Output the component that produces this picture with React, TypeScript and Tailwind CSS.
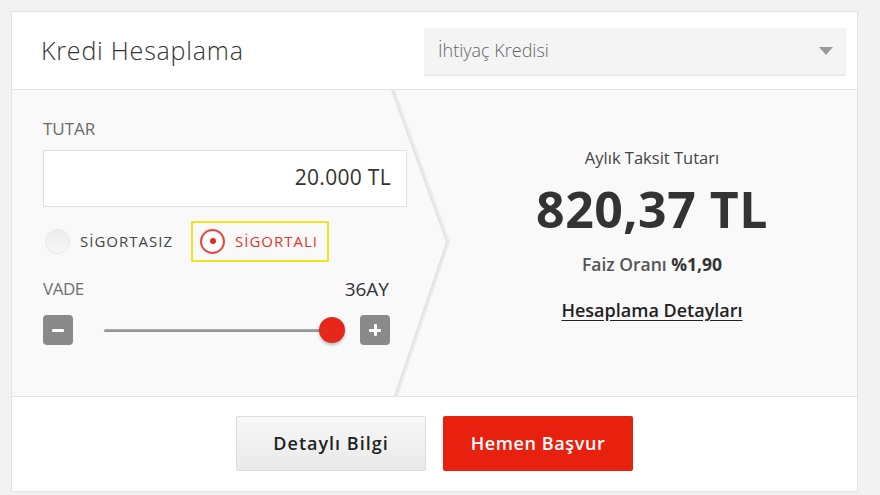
const font = { fontFamily: '"Open Sans", "Noto Sans", sans-serif' };

function Radio({ checked, label }: { checked?: boolean; label: string }) {
  return (
    <div className="flex items-center gap-[10px]">
      {checked ? (
        <span className="flex size-[25px] items-center justify-center rounded-full border-2 border-[#e5483f] bg-white">
          <span className="size-[6px] rounded-full bg-[#e52b1f]" />
        </span>
      ) : (
        <span className="size-[25px] rounded-full border border-[#e6e6e6] bg-gradient-to-b from-[#ececec] to-[#f7f7f7]" />
      )}
      <span
        className={`text-[15px] tracking-[1px] ${checked ? 'text-[#e0352b]' : 'text-[#444]'}`}
      >
        {label}
      </span>
    </div>
  );
}

function StepButton({ sign }: { sign: '-' | '+' }) {
  return (
    <button className="relative flex size-[30px] items-center justify-center rounded-[4px] bg-[#8a8a8a]">
      <span className="h-[3px] w-[12px] rounded-[1px] bg-white" />
      {sign === '+' && <span className="absolute h-[12px] w-[3px] rounded-[1px] bg-white" />}
    </button>
  );
}

export default function App() {
  return (
    <div className="h-[495px] w-[880px] overflow-hidden bg-[#f2f2f2] pl-[11px] pt-[11px]" style={font}>
      <div className="w-[847px] border border-[#e2e2e2] bg-white">
        {/* Header */}
        <header className="flex h-[78px] items-center justify-between border-b border-[#e4e4e4] pl-[29px] pr-[11px]">
          <h1 className="text-[25px] font-light tracking-[0.8px] text-[#333]">Kredi Hesaplama</h1>
          <div className="flex h-[46px] w-[422px] items-center justify-between bg-[#f4f4f4] pl-[14px] pr-[12px] shadow-[0_2px_1px_rgba(0,0,0,0.08)]">
            <span className="text-[18px] font-light text-[#666]">İhtiyaç Kredisi</span>
            <svg width="16" height="10" viewBox="0 0 16 10">
              <path d="M1 1h14L8 9z" fill="#999" />
            </svg>
          </div>
        </header>

        {/* Body */}
        <div className="relative flex h-[306px] bg-[#f9f9f9]">
          <svg className="absolute left-[376px] top-0" width="64" height="306" viewBox="0 0 64 306">
            <polyline points="5,0 60,152 8,306" fill="none" stroke="#ececec" strokeWidth="4" />
            <polyline points="4,0 59,152 7,306" fill="none" stroke="#e2e2e2" strokeWidth="1.5" />
          </svg>

          <div className="flex w-[435px] flex-col pl-[31px] pr-[40px] pt-[26px]">
            <div className="text-[17px] font-medium text-[#6a6a6a]">TUTAR</div>
            <div className="mt-[8px] flex h-[57px] w-[364px] items-center justify-end border border-[#e0e0e0] bg-white pr-[15px] text-[21px] font-medium tracking-[0.3px] text-[#333]">
              20.000 TL
            </div>
            <div className="mt-[14px] flex items-center gap-[18px] pl-[2px]">
              <Radio label="SİGORTASIZ" />
              <div className="flex h-[41px] items-center border-2 border-[#f3e21c] pl-[7px] pr-[9px]">
                <Radio checked label="SİGORTALI" />
              </div>
            </div>
            <div className="mt-[13px] flex w-[346px] items-center justify-between">
              <span className="text-[17px] tracking-[-0.5px] text-[#707070]">VADE</span>
              <span className="text-[19px] font-medium text-[#333]">36AY</span>
            </div>
            <div className="mt-[12px] flex w-[347px] items-center justify-between">
              <StepButton sign="-" />
              <div className="relative ml-[31px] mr-[28px] flex flex-1 items-center">
                <div className="h-[3px] w-full rounded-full bg-gradient-to-b from-[#b0b0b0] to-[#8c8c8c]" />
                <span className="absolute right-[-13px] size-[26px] rounded-full bg-[#e5281b] shadow-[0_2px_3px_rgba(0,0,0,0.25)]" />
              </div>
              <StepButton sign="+" />
            </div>
          </div>

          <div className="flex flex-1 flex-col items-center pt-[56px] text-center">
            <div className="text-[16.5px] font-medium text-[#444]">Aylık Taksit Tutarı</div>
            <div className="mt-[8px] text-[50px] font-bold leading-[60px] tracking-[0.5px] text-[#333]">
              820,37 TL
            </div>
            <div className="mt-[12px] text-[17.5px] font-semibold text-[#555]">
              Faiz Oranı <span className="font-bold text-[#333]">%1,90</span>
            </div>
            <a className="mt-[20px] text-[18px] font-semibold text-[#222] underline underline-offset-[3px]">
              Hesaplama Detayları
            </a>
          </div>
        </div>

        {/* Footer */}
        <footer className="flex h-[95px] items-center justify-center gap-[17px] border-t border-[#e4e4e4] pb-[2px]">
          <button className="h-[55px] w-[190px] rounded-[2px] border border-[#dcdcdc] bg-gradient-to-b from-[#f8f8f8] to-[#e9e9e9] text-[18px] font-semibold tracking-[1px] text-[#222]">
            Detaylı Bilgi
          </button>
          <button className="h-[55px] w-[190px] rounded-[2px] bg-[#e8210f] text-[18px] font-semibold tracking-[0.6px] text-white">
            Hemen Başvur
          </button>
        </footer>
      </div>
    </div>
  );
}
